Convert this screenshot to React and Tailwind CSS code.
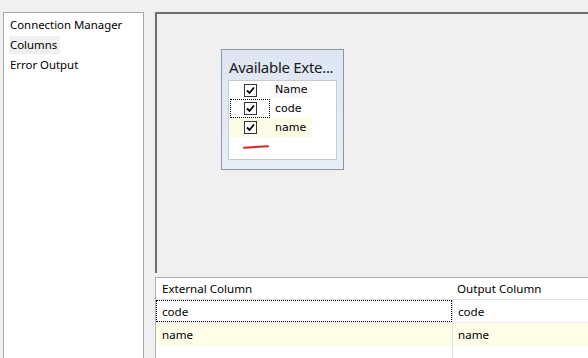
import React from "react";

const pages = ["Connection Manager", "Columns", "Error Output"];

const Check = () => (
    <span className="flex h-[13px] w-[13px] items-center justify-center border border-[#333] bg-white">
        <svg width="9" height="9" viewBox="0 0 9 9">
            <path d="M1 4.5 L3.5 7 L8 1.5" fill="none" stroke="#000" strokeWidth="1.8" />
        </svg>
    </span>
);

const boxRows = [
    { name: "code", focus: true },
    { name: "name", hl: true },
];

export default function App() {
    return (
        <div className="flex h-[358px] w-[588px] overflow-hidden bg-[#f0f0f0] font-['Noto_Sans',sans-serif] text-[12px] text-black">
            {/* page list */}
            <div className="ml-[3px] mt-[12px] h-[360px] w-[141px] shrink-0 border border-[#a8a8a8] bg-white pt-[2px] text-[11.4px]">
                {pages.map((p, i) => (
                    <div key={i} className="flex h-[20px] items-center pl-[6px]">
                        <span className={i === 1 ? "-ml-[1px] bg-[#f0f0f0] pl-[1px] pr-[3px]" : ""}>{p}</span>
                    </div>
                ))}
            </div>

            <div className="ml-[11px] flex h-[358px] flex-1 flex-col overflow-hidden">
                {/* designer surface */}
                <div className="mt-[12px] h-[261px] shrink-0 border-l-2 border-t-2 border-[#6d6d6d] bg-[#f0f0f0] pl-[64px] pt-[35px]">
                    <div className="h-[121px] w-[123px] border border-[#8d96a3] bg-gradient-to-b from-[#dde6f2] to-[#e9eef6] px-[6px]">
                        <div className="pl-[1px] pt-[7px] text-[15px] leading-[20px] tracking-[-0.3px] text-[#1a1a1a]">Available Exte...</div>
                        <div className="mt-[3px] h-[80px] border border-[#c7ccd3] bg-white pl-[1px] font-['DejaVu_Sans',sans-serif] text-[11px]">
                            <div className="flex h-[18px] items-center">
                                <div className="flex w-[40px] justify-center"><Check /></div>
                                <div className="flex h-full w-[42px] items-center bg-[#fafafa] pl-[5px]">Name</div>
                            </div>
                            {boxRows.map((r, i) => (
                                <div key={i} className={`flex h-[19px] w-[82px] items-center ${r.hl ? "bg-[#fbfbe6]" : ""}`}>
                                    <div className={`flex h-full w-[40px] items-center justify-center ${r.focus ? "border border-dotted border-black" : ""}`}><Check /></div>
                                    <div className="pl-[5px] pt-[1px]">{r.name}</div>
                                </div>
                            ))}
                            <div className="ml-[13px] mt-[9px] h-[2px] w-[26px] -rotate-3 rounded-full bg-[#d22]"></div>
                        </div>
                    </div>
                </div>

                {/* column grid */}
                <div className="mt-[4px] flex-1 border-l border-t border-[#b0b0b0] bg-white text-[11.6px]">
                    <div className="flex h-[22px] items-center border-b border-[#e4e4e4]">
                        <div className="w-[296px] pl-[6px]">External Column</div>
                        <div className="pl-[5px]">Output Column</div>
                    </div>
                    <div className="flex h-[23px] border-b border-[#ededed]">
                        <div className="flex w-[296px] items-center border border-dotted border-black pl-[5px] pt-[2px]">code</div>
                        <div className="flex items-center border-l border-[#e0e0e0] pl-[5px] pt-[2px]">code</div>
                    </div>
                    <div className="flex h-[23px] bg-[#fdfde8]">
                        <div className="flex w-[296px] items-center pl-[6px] pt-[1px]">name</div>
                        <div className="flex items-center border-l border-[#e0e0e0] pl-[5px] pt-[1px]">name</div>
                    </div>
                    <div className="flex h-[20px]">
                        <div className="w-[296px]"></div>
                        <div className="h-full border-l border-[#e0e0e0]"></div>
                    </div>
                </div>
            </div>
        </div>
    );
}
